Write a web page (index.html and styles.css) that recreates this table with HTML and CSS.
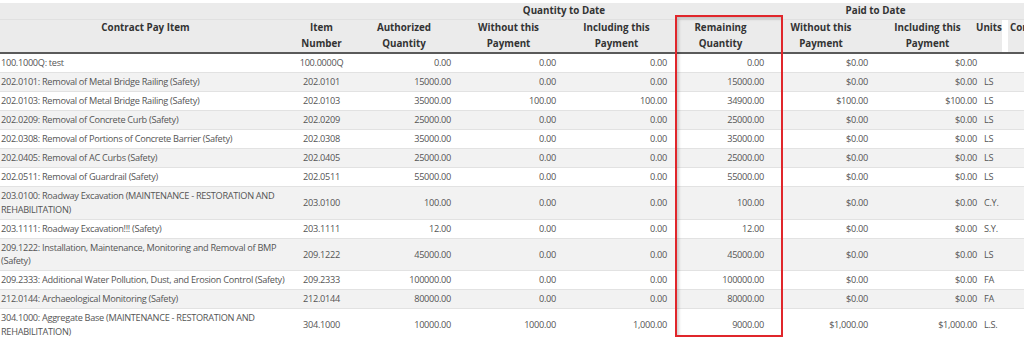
FILE: index.html
```html
<!DOCTYPE html>
<html>
<head>
    <title>Pay Estimate Items</title>
    <link rel="stylesheet" href="styles.css">
</head>
<body>
<div class="items">
    <table class="pay-table">
        <colgroup>
            <col class="c-item">
            <col class="c-number">
            <col class="c-auth">
            <col class="c-qwo">
            <col class="c-qwi">
            <col class="c-rem">
            <col class="c-pwo">
            <col class="c-pwi">
            <col class="c-units">
            <col class="c-extra">
        </colgroup>
        <thead>
            <tr class="group">
                <th></th>
                <th></th>
                <th></th>
                <th colspan="2">Quantity to Date</th>
                <th></th>
                <th colspan="2">Paid to Date</th>
                <th></th>
                <th></th>
            </tr>
            <tr class="labels">
                <th>Contract Pay Item</th>
                <th>Item Number</th>
                <th>Authorized Quantity</th>
                <th>Without this Payment</th>
                <th>Including this Payment</th>
                <th>Remaining Quantity</th>
                <th>Without this Payment</th>
                <th>Including this Payment</th>
                <th class="units">Units</th>
                <th class="extra">Comments</th>
            </tr>
        </thead>
        <tbody>
            <tr><td>100.1000Q: test</td><td class="num">100.0000Q</td><td class="val">0.00</td><td class="val">0.00</td><td class="val">0.00</td><td class="val">0.00</td><td class="val">$0.00</td><td class="val">$0.00</td><td class="unit"></td><td></td></tr>
            <tr><td>202.0101: Removal of Metal Bridge Railing (Safety)</td><td class="num">202.0101</td><td class="val">15000.00</td><td class="val">0.00</td><td class="val">0.00</td><td class="val">15000.00</td><td class="val">$0.00</td><td class="val">$0.00</td><td class="unit">LS</td><td></td></tr>
            <tr><td>202.0103: Removal of Metal Bridge Railing (Safety)</td><td class="num">202.0103</td><td class="val">35000.00</td><td class="val">100.00</td><td class="val">100.00</td><td class="val">34900.00</td><td class="val">$100.00</td><td class="val">$100.00</td><td class="unit">LS</td><td></td></tr>
            <tr><td>202.0209: Removal of Concrete Curb (Safety)</td><td class="num">202.0209</td><td class="val">25000.00</td><td class="val">0.00</td><td class="val">0.00</td><td class="val">25000.00</td><td class="val">$0.00</td><td class="val">$0.00</td><td class="unit">LS</td><td></td></tr>
            <tr><td>202.0308: Removal of Portions of Concrete Barrier (Safety)</td><td class="num">202.0308</td><td class="val">35000.00</td><td class="val">0.00</td><td class="val">0.00</td><td class="val">35000.00</td><td class="val">$0.00</td><td class="val">$0.00</td><td class="unit">LS</td><td></td></tr>
            <tr><td>202.0405: Removal of AC Curbs (Safety)</td><td class="num">202.0405</td><td class="val">25000.00</td><td class="val">0.00</td><td class="val">0.00</td><td class="val">25000.00</td><td class="val">$0.00</td><td class="val">$0.00</td><td class="unit">LS</td><td></td></tr>
            <tr><td>202.0511: Removal of Guardrail (Safety)</td><td class="num">202.0511</td><td class="val">55000.00</td><td class="val">0.00</td><td class="val">0.00</td><td class="val">55000.00</td><td class="val">$0.00</td><td class="val">$0.00</td><td class="unit">LS</td><td></td></tr>
            <tr><td>203.0100: Roadway Excavation (MAINTENANCE - RESTORATION AND REHABILITATION)</td><td class="num">203.0100</td><td class="val">100.00</td><td class="val">0.00</td><td class="val">0.00</td><td class="val">100.00</td><td class="val">$0.00</td><td class="val">$0.00</td><td class="unit">C.Y.</td><td></td></tr>
            <tr><td>203.1111: Roadway Excavation!!! (Safety)</td><td class="num">203.1111</td><td class="val">12.00</td><td class="val">0.00</td><td class="val">0.00</td><td class="val">12.00</td><td class="val">$0.00</td><td class="val">$0.00</td><td class="unit">S.Y.</td><td></td></tr>
            <tr><td>209.1222: Installation, Maintenance, Monitoring and Removal of BMP (Safety)</td><td class="num">209.1222</td><td class="val">45000.00</td><td class="val">0.00</td><td class="val">0.00</td><td class="val">45000.00</td><td class="val">$0.00</td><td class="val">$0.00</td><td class="unit">LS</td><td></td></tr>
            <tr><td>209.2333: Additional Water Pollution, Dust, and Erosion Control (Safety)</td><td class="num">209.2333</td><td class="val">100000.00</td><td class="val">0.00</td><td class="val">0.00</td><td class="val">100000.00</td><td class="val">$0.00</td><td class="val">$0.00</td><td class="unit">FA</td><td></td></tr>
            <tr><td>212.0144: Archaeological Monitoring (Safety)</td><td class="num">212.0144</td><td class="val">80000.00</td><td class="val">0.00</td><td class="val">0.00</td><td class="val">80000.00</td><td class="val">$0.00</td><td class="val">$0.00</td><td class="unit">FA</td><td></td></tr>
            <tr><td>304.1000: Aggregate Base (MAINTENANCE - RESTORATION AND REHABILITATION)</td><td class="num">304.1000</td><td class="val">10000.00</td><td class="val">1000.00</td><td class="val">1,000.00</td><td class="val">9000.00</td><td class="val">$1,000.00</td><td class="val">$1,000.00</td><td class="unit">L.S.</td><td></td></tr>
        </tbody>
    </table>
    <div class="highlight"></div>
</div>
</body>
</html>
```

FILE: styles.css
```css
html, body {
    margin:0;
    padding:0;
    background:#FFFFFF;
    overflow:hidden;
}

.items {
    position:relative;
    width:1024px;
    padding-top:3px;
    overflow:hidden;
    font-family: "Open Sans", "Liberation Sans", sans-serif;
    font-size:9.2px;
    color:#555555;
}

.pay-table {
    width:1090px;
    table-layout:fixed;
    border-collapse:collapse;
}

.c-item { width:291px; }
.c-number { width:61px; }
.c-auth { width:104px; }
.c-qwo { width:105px; }
.c-qwi { width:111px; }
.c-rem { width:97px; }
.c-pwo { width:104px; }
.c-pwi { width:109px; }
.c-units { width:26px; }
.c-extra { width:82px; }

.pay-table thead th {
    background:#EBEBEB;
    color:#333333;
    font-weight:bold;
    font-size:9.8px;
    line-height:16px;
    text-align:center;
    vertical-align:top;
    padding:0 4px;
}

.pay-table thead tr.group th {
    border-bottom:1px solid #E0E0E0;
}

.pay-table thead tr.labels th {
    border-bottom:2px solid #5A5A5A;
}

.pay-table thead th.units {
    text-align:left;
    padding-left:0;
    white-space:nowrap;
    position:relative;
    left:-6px;
}

.pay-table thead th.extra {
    text-align:left;
    white-space:nowrap;
    padding-left:2px;
}

.pay-table td {
    line-height:13.5px;
    padding:2.25px 5px 2.25px 4px;
    border-top:1px solid #E2E2E2;
    vertical-align:middle;
    letter-spacing:-0.3px;
}

.pay-table tbody tr:nth-child(even) td {
    background:#F2F2F2;
}

.pay-table tbody tr:last-child td {
    border-bottom:1px solid #E2E2E2;
}

.pay-table td:first-child {
    padding-left:1px;
    padding-right:2px;
}

.pay-table td.num {
    text-align:center;
    padding-left:2px;
    padding-right:2px;
}

.pay-table td.val {
    text-align:right;
}

.pay-table td.unit {
    padding-left:2px;
    padding-right:0;
}

/* annotation drawn over the remaining quantity column */
.highlight {
    position:absolute;
    left:675px;
    top:15px;
    width:104px;
    height:318px;
    border:2px solid #E0262B;
    box-shadow:inset 2px 2px 3px rgba(0,0,0,0.18);
    pointer-events:none;
}
```
